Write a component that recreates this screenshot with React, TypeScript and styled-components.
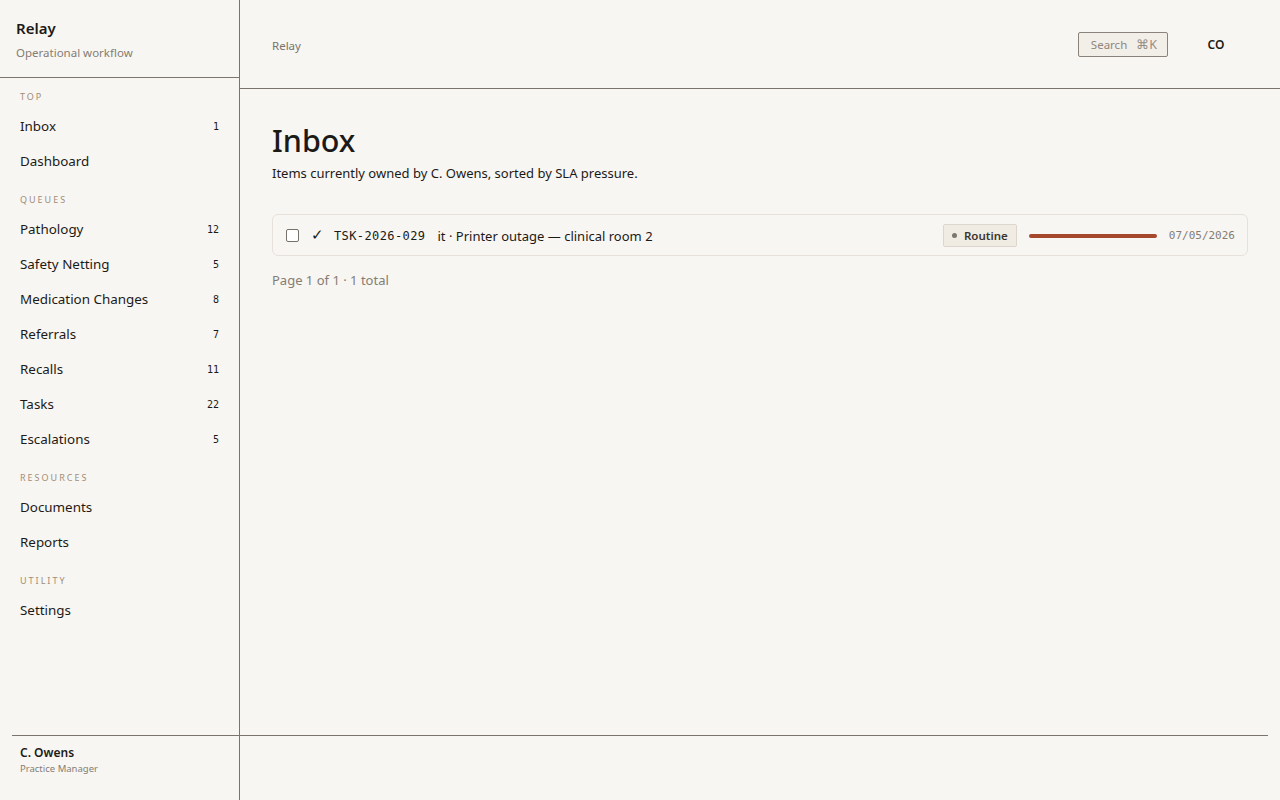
import React from 'react';
import styled, { createGlobalStyle } from 'styled-components';

interface NavItem {
  label: string;
  count?: number;
}

interface NavSection {
  title: string;
  items: NavItem[];
}

const sections: NavSection[] = [
  { title: 'Top', items: [{ label: 'Inbox', count: 1 }, { label: 'Dashboard' }] },
  {
    title: 'Queues',
    items: [
      { label: 'Pathology', count: 12 },
      { label: 'Safety Netting', count: 5 },
      { label: 'Medication Changes', count: 8 },
      { label: 'Referrals', count: 7 },
      { label: 'Recalls', count: 11 },
      { label: 'Tasks', count: 22 },
      { label: 'Escalations', count: 5 },
    ],
  },
  { title: 'Resources', items: [{ label: 'Documents' }, { label: 'Reports' }] },
  { title: 'Utility', items: [{ label: 'Settings' }] },
];

const GlobalStyle = createGlobalStyle`
  html, body {
    margin: 0;
    padding: 0;
    background: #f8f6f2;
    color: #1c1a17;
    font-family: 'Noto Sans', 'Open Sans', sans-serif;
  }
  * { box-sizing: border-box; }
`;

const Shell = styled.div`
  display: flex;
  height: 800px;
  width: 1280px;
  background: #f8f6f2;
`;

const Sidebar = styled.aside`
  width: 240px;
  flex-shrink: 0;
  display: flex;
  flex-direction: column;
  border-right: 1px solid #7b746d;
`;

const Brand = styled.div`
  height: 78px;
  padding: 18px 16px 0;
  border-bottom: 1px solid #7b746d;
`;

const BrandName = styled.div`
  font-size: 15px;
  font-weight: 600;
  line-height: 20px;
`;

const BrandTag = styled.div`
  margin-top: 7px;
  font-size: 11.5px;
  line-height: 16px;
  color: #857d74;
`;

const Nav = styled.nav`
  flex: 1;
  padding: 0 8px;
`;

const SectionLabel = styled.div`
  padding: 13px 12px 6px;
  font-size: 9px;
  line-height: 12px;
  letter-spacing: 2px;
  text-transform: uppercase;
  color: #a08d78;
`;

const Section = styled.div`
  & + & ${SectionLabel} {
    padding-top: 15px;
  }
`;

const NavRow = styled.div`
  display: flex;
  align-items: center;
  justify-content: space-between;
  height: 35px;
  padding: 0 12px 1px;
  font-size: 13.4px;
  color: #1c1a17;
`;

const Count = styled.span`
  font-family: 'DejaVu Sans Mono', monospace;
  font-size: 10px;
`;

const UserBlock = styled.div`
  height: 65px;
  margin-left: 12px;
  padding: 9px 8px 0;
  border-top: 1px solid #7b746d;
`;

const UserName = styled.div`
  font-size: 12px;
  font-weight: 600;
  line-height: 16px;
`;

const UserRole = styled.div`
  font-size: 9.5px;
  line-height: 15px;
  color: #857d74;
`;

const Main = styled.main`
  flex: 1;
  display: flex;
  flex-direction: column;
  min-width: 0;
`;

const Topbar = styled.header`
  height: 89px;
  flex-shrink: 0;
  display: flex;
  align-items: center;
  padding: 2px 48px 0 32px;
  border-bottom: 1px solid #7b746d;
`;

const Crumb = styled.div`
  flex: 1;
  font-size: 11.5px;
  color: #7a736b;
`;

const SearchButton = styled.button`
  display: flex;
  align-items: center;
  gap: 9px;
  height: 25px;
  margin-top: -2px;
  padding: 0 10px 0 12px;
  border: 1px solid #8a837c;
  border-radius: 2px;
  background: #f2eee8;
  color: #8f877e;
  font-family: inherit;
  font-size: 11.5px;
`;

const Shortcut = styled.span`
  font-size: 12.5px;
  color: #958d84;
`;

const Avatar = styled.div`
  width: 32px;
  margin-left: 32px;
  margin-top: -2px;
  text-align: center;
  font-size: 12px;
  font-weight: 600;
`;

const Content = styled.section`
  flex: 1;
  padding: 29px 32px 0;
`;

const Title = styled.h1`
  margin: 0;
  font-size: 30.5px;
  font-weight: 500;
  line-height: 44px;
`;

const Subtitle = styled.p`
  margin: 2px 0 0;
  font-size: 13px;
  line-height: 18px;
`;

const List = styled.div`
  margin-top: 32px;
`;

const Row = styled.div`
  display: flex;
  align-items: center;
  gap: 12px;
  height: 42px;
  padding: 1px 12px 0 13px;
  border: 1px solid #e6e2db;
  border-radius: 6px;
`;

const Box = styled.span`
  width: 13px;
  height: 13px;
  border: 1px solid #77716b;
  border-radius: 2px;
  background: #fff;
`;

const Tick = styled.span`
  width: 11px;
  font-family: 'DejaVu Sans', sans-serif;
  font-size: 15px;
  font-weight: 300;
  line-height: 1;
  color: #1c1a17;
`;

const Ref = styled.span`
  font-family: 'DejaVu Sans Mono', monospace;
  font-size: 12px;
  letter-spacing: 0.4px;
`;

const RowTitle = styled.span`
  flex: 1;
  font-size: 13px;
`;

const Tag = styled.span`
  display: flex;
  align-items: center;
  gap: 7px;
  height: 23px;
  padding: 0 8px;
  border: 1px solid #ddd6cc;
  border-radius: 2px;
  background: #f0ebe3;
  font-size: 11.5px;
  font-weight: 600;
  color: #3b3631;
`;

const Dot = styled.span`
  width: 5px;
  height: 5px;
  border-radius: 50%;
  background: #7c766f;
`;

const Track = styled.span`
  width: 128px;
  height: 4px;
  border-radius: 2px;
  background: #e9e3da;
  overflow: hidden;
`;

const Fill = styled.span`
  display: block;
  height: 100%;
  background: #a6482c;
`;

const Due = styled.span`
  font-family: 'DejaVu Sans Mono', monospace;
  font-size: 11px;
  color: #857d74;
`;

const Pager = styled.div`
  margin-top: 15px;
  font-size: 13px;
  line-height: 18px;
  color: #857d74;
`;

const Footer = styled.footer`
  height: 65px;
  margin-right: 12px;
  border-top: 1px solid #7b746d;
`;

export default function App() {
  const slaUsed = 1;

  return (
    <>
      <GlobalStyle />
      <Shell>
        <Sidebar>
          <Brand>
            <BrandName>Relay</BrandName>
            <BrandTag>Operational workflow</BrandTag>
          </Brand>
          <Nav>
            {sections.map(section => (
              <Section key={section.title}>
                <SectionLabel>{section.title}</SectionLabel>
                {section.items.map(item => (
                  <NavRow key={item.label}>
                    <span>{item.label}</span>
                    {item.count !== undefined && <Count>{item.count}</Count>}
                  </NavRow>
                ))}
              </Section>
            ))}
          </Nav>
          <UserBlock>
            <UserName>C. Owens</UserName>
            <UserRole>Practice Manager</UserRole>
          </UserBlock>
        </Sidebar>
        <Main>
          <Topbar>
            <Crumb>Relay</Crumb>
            <SearchButton>
              <span>Search</span>
              <Shortcut>⌘K</Shortcut>
            </SearchButton>
            <Avatar>CO</Avatar>
          </Topbar>
          <Content>
            <Title>Inbox</Title>
            <Subtitle>Items currently owned by C. Owens, sorted by SLA pressure.</Subtitle>
            <List>
              <Row>
                <Box />
                <Tick>✓</Tick>
                <Ref>TSK-2026-029</Ref>
                <RowTitle>it · Printer outage — clinical room 2</RowTitle>
                <Tag>
                  <Dot />
                  Routine
                </Tag>
                <Track>
                  <Fill style={{ width: `${slaUsed * 100}%` }} />
                </Track>
                <Due>07/05/2026</Due>
              </Row>
            </List>
            <Pager>Page 1 of 1 · 1 total</Pager>
          </Content>
          <Footer />
        </Main>
      </Shell>
    </>
  );
}
